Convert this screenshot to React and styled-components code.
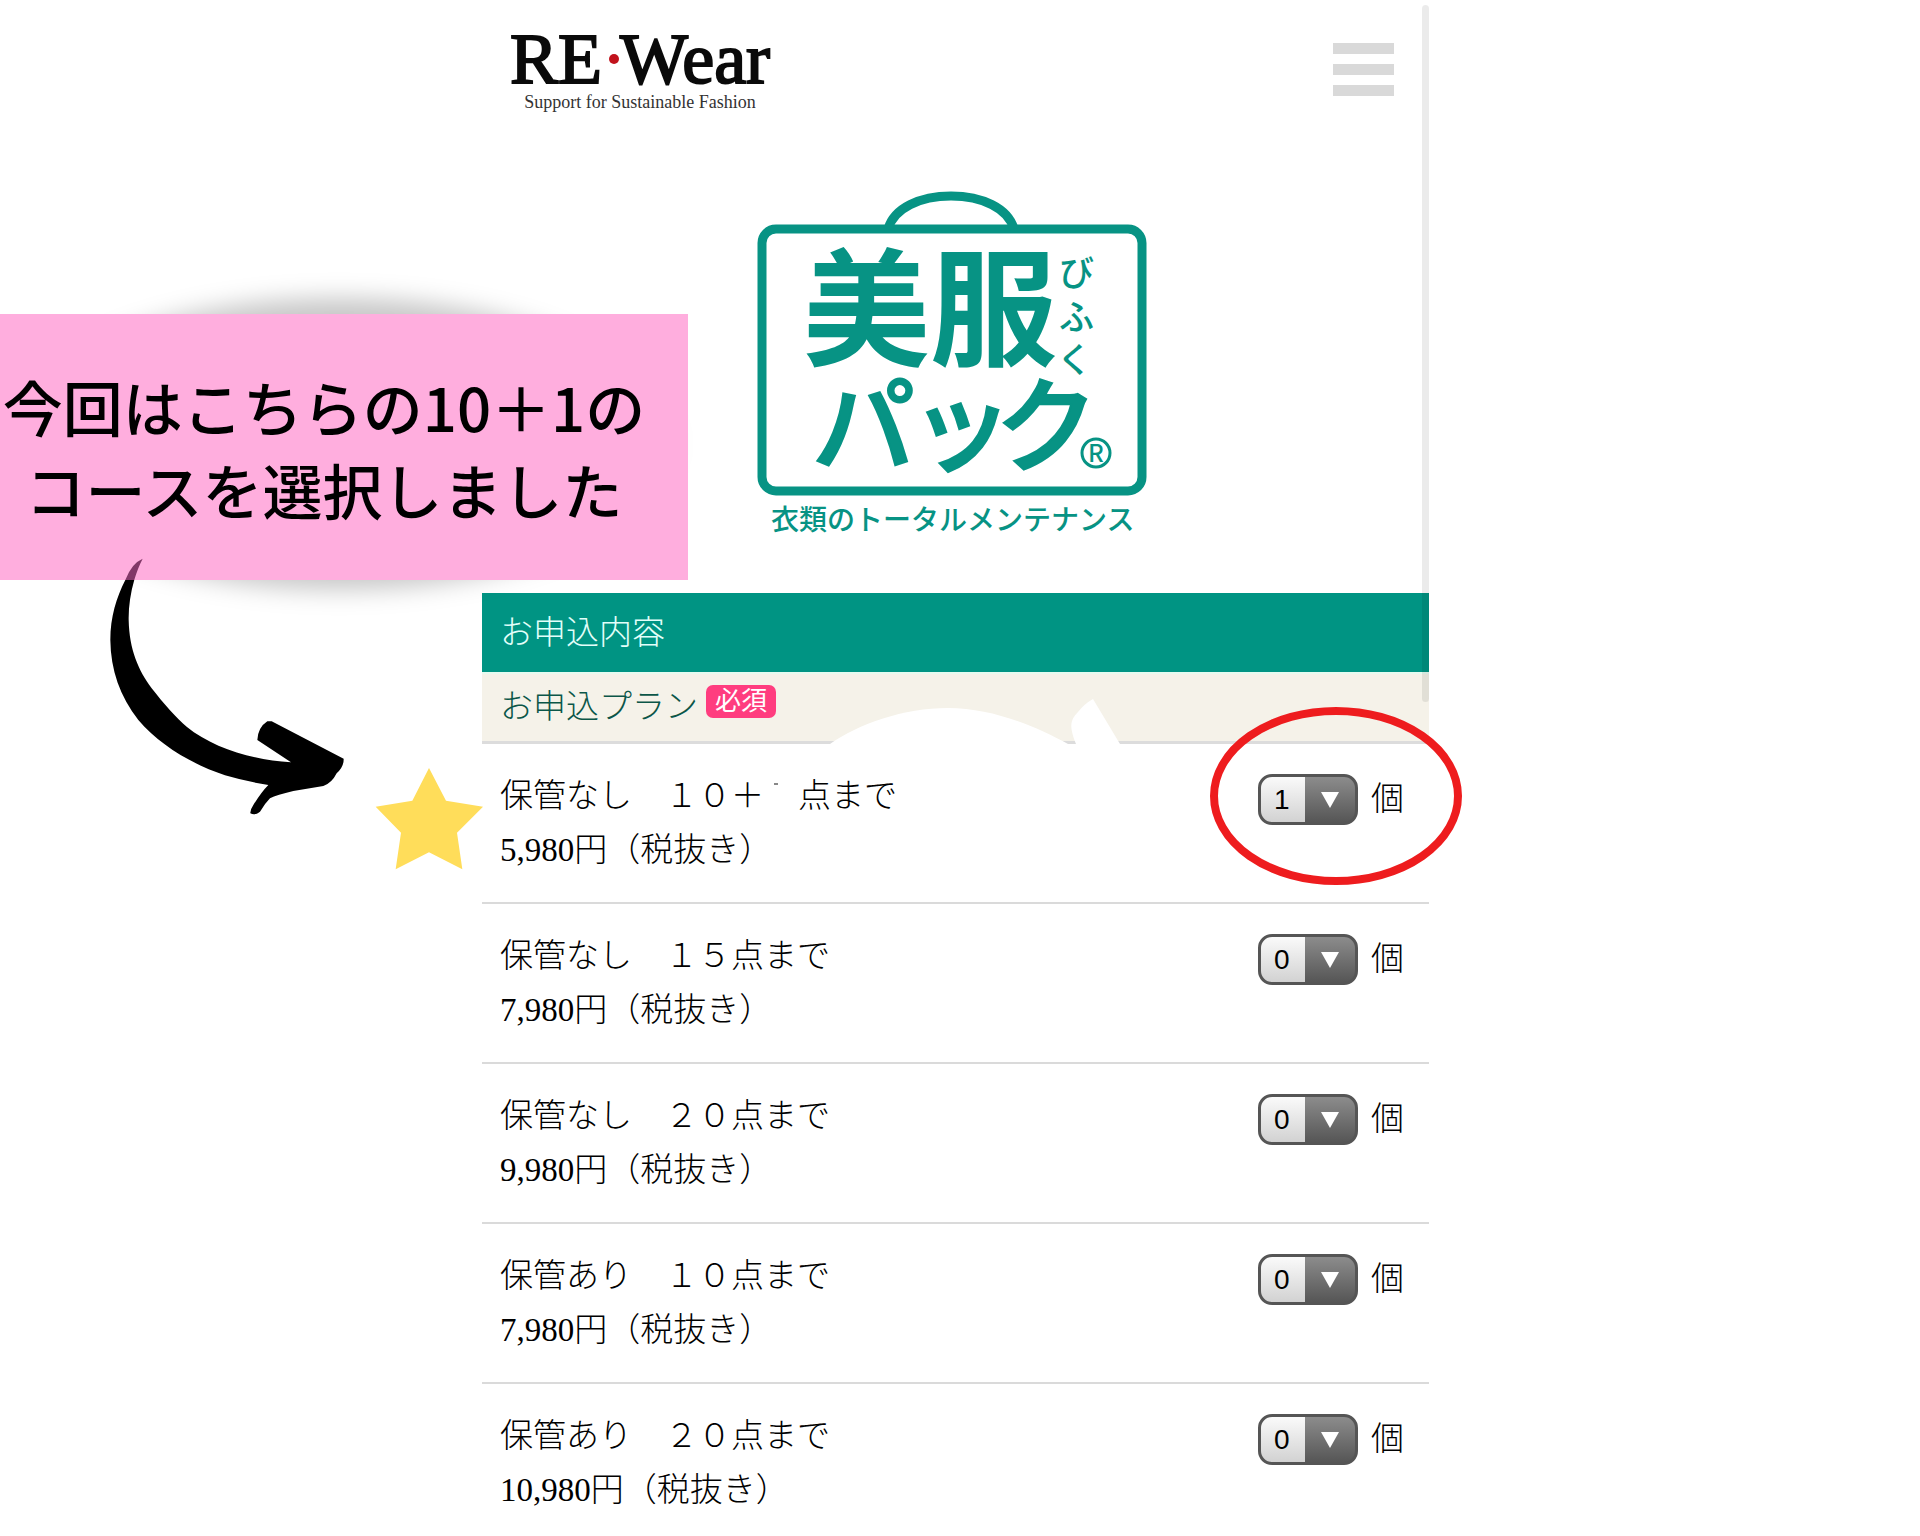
import React, { useState } from "react";
import styled, { createGlobalStyle } from "styled-components";

const GlobalStyle = createGlobalStyle`
  * {
    box-sizing: border-box;
  }
  body {
    margin: 0;
    background: #fff;
    color: #000;
    font-family: "Liberation Serif", "Noto Sans CJK JP", serif;
    font-size: 33px;
    font-weight: 300;
  }
`;

const Page = styled.div`
  position: relative;
  display: grid;
  grid-template-columns: 482fr 947fr 491fr;
  min-height: 100vh;
  overflow: hidden;
`;

const Screen = styled.main`
  position: relative;
  grid-column: 2;
`;

const ScrollThumb = styled.div`
  position: absolute;
  top: 5px;
  right: 0;
  width: 7px;
  height: 697px;
  border-radius: 4px;
  background: rgba(0, 0, 0, 0.08);
`;

const Header = styled.header`
  display: flex;
  justify-content: space-between;
  align-items: flex-start;
  height: 170px;
  padding: 25px 35px 0 28px;
`;

const Brand = styled.a`
  display: flex;
  flex-direction: column;
  align-items: center;
  color: #0a0a0a;
  text-decoration: none;
`;

const BrandName = styled.span`
  display: flex;
  align-items: center;
  font-size: 72px;
  line-height: 68px;
  -webkit-text-stroke: 2px #0a0a0a;
`;

const Dot = styled.i`
  width: 10px;
  height: 10px;
  margin: 0 1px 0 7px;
  border-radius: 50%;
  background: #c1121c;
`;

const Tagline = styled.span`
  color: #333;
  font-size: 18px;
  font-weight: 400;
  line-height: 18px;
`;

const MenuButton = styled.button`
  display: flex;
  flex-direction: column;
  gap: 10px;
  margin-top: 18px;
  padding: 0;
  border: 0;
  background: none;

  span {
    width: 61px;
    height: 11px;
    background: #d9d9d9;
  }
`;

const Hero = styled.div`
  display: flex;
  justify-content: center;
  height: 423px;
`;

const Section = styled.h2`
  margin: 0;
  padding: 13px 18px 0;
  height: 79px;
  background: #009483;
  color: #e2fffa;
  font-size: 33px;
  font-weight: 300;
  line-height: 54px;
`;

const PlanHead = styled.div`
  position: relative;
  display: flex;
  align-items: flex-start;
  gap: 8px;
  height: 72px;
  padding: 6px 18px 0;
  border-top: 2px solid #e6fbf0;
  border-bottom: 3px solid #dcdcdc;
  background: #f5f2e9;
  color: #0b5648;
  line-height: 54px;
`;

const Required = styled.span`
  margin-top: 5px;
  padding: 1px 9px 0;
  border-radius: 7px;
  background: #ff3d7f;
  color: #fff;
  font-size: 26px;
  font-weight: 400;
  line-height: 32px;
`;

const WhiteShape = styled.svg`
  position: absolute;
  left: 348px;
  bottom: -3px;
`;

const Plans = styled.ul`
  margin: 0;
  padding: 0;
  list-style: none;
`;

const Plan = styled.li`
  display: flex;
  justify-content: space-between;
  align-items: flex-start;
  padding: 25px 25px;
  border-bottom: 2px solid #dadada;
  padding-left: 18px;

  &:last-child {
    padding-bottom: 0;
    border-bottom: 0;
  }
`;

const PlanText = styled.label`
  line-height: 54px;

  span {
    display: block;
  }
`;

const Speck = styled.i`
  display: inline-block;
  width: 34px;
  height: 24px;
  background: linear-gradient(#888, #888) 10px 0 / 4px 2px no-repeat;
`;

const Quantity = styled.div`
  position: relative;
  display: flex;
  align-items: center;
  gap: 13px;
  margin-top: 5px;
  line-height: 51px;
`;

const SelectBox = styled.div`
  position: relative;
  display: flex;

  select {
    appearance: none;
    width: 100px;
    height: 51px;
    padding: 0 0 0 13px;
    border: 3px solid #555;
    border-radius: 14px;
    background: linear-gradient(#8c8c8c, #565656) 44px 0 / 52px 100% no-repeat,
      linear-gradient(#fafafa, #d2d2d2);
    color: #000;
    font-family: "Liberation Sans", Arial, sans-serif;
    font-size: 28px;
  }

  svg {
    position: absolute;
    top: 18px;
    right: 19px;
    pointer-events: none;
  }
`;

const Circle = styled.svg`
  position: absolute;
  top: -66px;
  left: -47px;
  overflow: visible;
  pointer-events: none;
`;

const Note = styled.aside`
  position: absolute;
  top: 314px;
  left: 0;
  width: 688px;
  height: 266px;

  &::before {
    content: "";
    position: absolute;
    inset: -16px 20px -10px 10px;
    border-radius: 50%;
    background: rgba(0, 0, 0, 0.22);
    filter: blur(12px);
  }

  p {
    position: relative;
    height: 100%;
    margin: 0;
    padding: 50px 40px 0 0;
    background: #ffaede;
    font-family: "Noto Sans CJK JP", sans-serif;
    font-size: 60px;
    font-weight: 500;
    line-height: 83px;
    text-align: center;
    white-space: nowrap;
  }
`;

const Arrow = styled.svg`
  position: absolute;
  top: 540px;
  left: 80px;
`;

const Star = styled.svg`
  position: absolute;
  top: 768px;
  left: 375px;
`;

const plans = [
  { name: "保管なし　１０＋", rest: "点まで", price: "5,980", count: "1", marked: true },
  { name: "保管なし　１５点まで", price: "7,980", count: "0" },
  { name: "保管なし　２０点まで", price: "9,980", count: "0" },
  { name: "保管あり　１０点まで", price: "7,980", count: "0" },
  { name: "保管あり　２０点まで", price: "10,980", count: "0" },
];

const arrowPath =
  "M188 56C160 110 145 180 146 240C148 330 175 390 215 445C250 490 290 535 320 560C400 625 520 660 633 667L532 600Q534 562 562 544L575 544L791 656Q792 680 770 700Q755 730 730 738L640 753Q590 765 570 775Q555 790 540 815Q525 828 511 820Q510 810 520 795Q545 755 565 735Q500 725 435 706C330 670 240 615 175 540C120 470 92 390 91 300C91 230 110 170 137 118Q155 70 188 56Z";

const PackLogo = () => (
  <svg
    width="450"
    height="380"
    viewBox="1 0 450 380"
    fill="#079384"
    fontFamily="'Noto Sans CJK JP', sans-serif"
    role="img"
    aria-label="美服パック"
  >
    <g fill="none" stroke="#079384" strokeWidth="9">
      <rect x="32" y="59" width="380" height="262" rx="14" />
      <path d="M158 59C164 38 190 26 221 26S278 38 284 59" />
    </g>
    <g fontWeight="700">
      <text x="73 200" y="186" fontSize="127">
        美服
      </text>
    </g>
    {/* the kana are drawn a little lighter than the kanji */}
    <g fontWeight="500" stroke="#079384" strokeWidth="2">
      <text x="82 180 265" y="294" fontSize="103">
        パック
      </text>
    </g>
    <g fontWeight="500">
      <text x="329" y="116" fontSize="35">
        び
      </text>
      <text x="329" y="160" fontSize="35">
        ふ
      </text>
      <text x="327" y="203" fontSize="35">
        く
      </text>
      <text x="41" y="360" fontSize="28">
        衣類のトータルメンテナンス
      </text>
    </g>
    <circle cx="366" cy="283" r="14" fill="none" stroke="#079384" strokeWidth="3" />
    <text x="358" y="292" fontSize="24" fontWeight="500">
      R
    </text>
  </svg>
);

const PlanRow = ({ plan, id }) => {
  const [count, setCount] = useState(plan.count);

  return (
    <Plan>
      <PlanText htmlFor={id}>
        <span>
          {plan.name}
          {plan.rest && <Speck />}
          {plan.rest}
        </span>
        <span>{plan.price}円（税抜き）</span>
      </PlanText>
      <Quantity>
        <SelectBox>
          <select id={id} value={count} onChange={(e) => setCount(e.target.value)}>
            {["0", "1", "2", "3"].map((n) => (
              <option key={n}>{n}</option>
            ))}
          </select>
          <svg width="18" height="16" viewBox="0 0 18 16">
            <path d="M0 0H18L9 16Z" fill="#fff" />
          </svg>
        </SelectBox>
        個
        {plan.marked && (
          <Circle width="251" height="177">
            <ellipse
              cx="125"
              cy="88"
              rx="122"
              ry="85"
              fill="none"
              stroke="#ee1c1e"
              strokeWidth="8"
            />
          </Circle>
        )}
      </Quantity>
    </Plan>
  );
};

const App = () => (
  <Page>
    <GlobalStyle />
    <Screen>
      <Header>
        <Brand href="#">
          <BrandName>
            RE
            <Dot />
            Wear
          </BrandName>
          <Tagline>Support for Sustainable Fashion</Tagline>
        </Brand>
        <MenuButton type="button" aria-label="メニュー">
          <span />
          <span />
          <span />
        </MenuButton>
      </Header>
      <Hero>
        <PackLogo />
      </Hero>
      <Section>お申込内容</Section>
      <PlanHead>
        お申込プラン
        <Required>必須</Required>
        <WhiteShape width="292" height="48" viewBox="0 0 292 48" fill="#fff">
          <path d="M0 48C28 28 74 12 118 12C162 12 205 30 238 48Z" />
          <path d="M246 48C240 32 239 25 248 16Q254 8 263 3L290 48Z" />
        </WhiteShape>
      </PlanHead>
      <Plans>
        {plans.map((plan, i) => (
          <PlanRow key={i} id={`plan-${i}`} plan={plan} />
        ))}
      </Plans>
      <ScrollThumb />
    </Screen>

    <Note>
      <p>
        今回はこちらの10＋1の
        <br />
        コースを選択しました
      </p>
    </Note>
    <Arrow width="270" height="280" viewBox="0 0 810 840">
      <defs>
        <clipPath id="overNote">
          <rect width="810" height="120" />
        </clipPath>
        <clipPath id="belowNote">
          <rect y="120" width="810" height="720" />
        </clipPath>
      </defs>
      <path d={arrowPath} clipPath="url(#belowNote)" />
      <path d={arrowPath} fill="#823868" clipPath="url(#overNote)" />
    </Arrow>
    <Star width="108" height="102" viewBox="0 0 324 306">
      <path
        d="M162 0L213 98L324 116L246 194L262 304L162 253L62 304L78 194L2 116L112 98Z"
        fill="#ffdd5a"
      />
    </Star>
  </Page>
);

export default App;
